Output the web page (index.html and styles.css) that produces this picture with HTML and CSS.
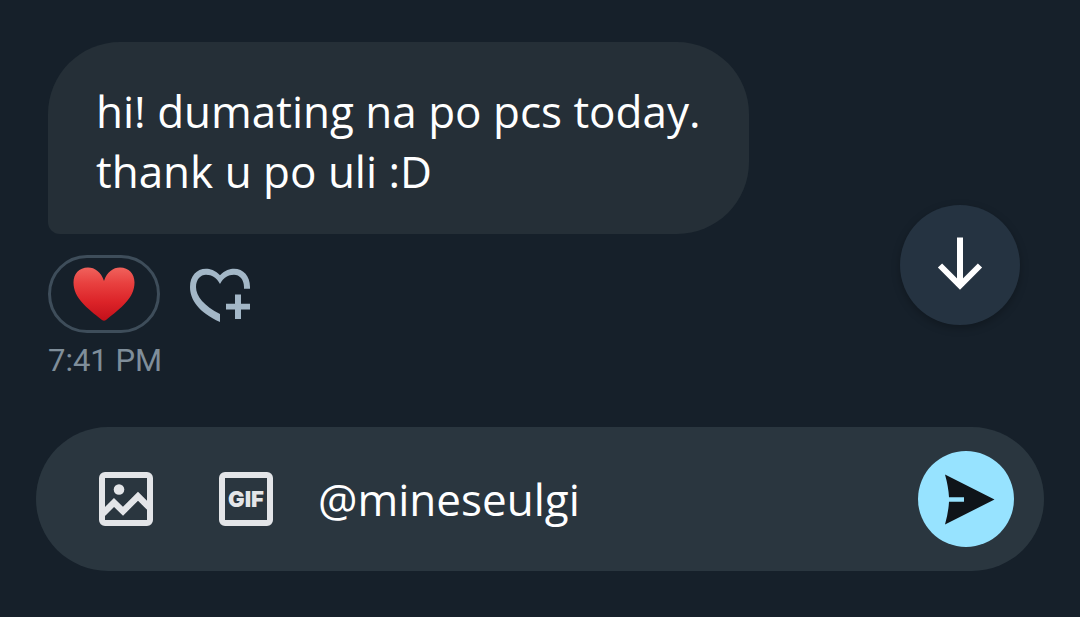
FILE: index.html
```html
<!DOCTYPE html>
<html lang="tl">
<head>
  <meta charset="UTF-8">
  <meta name="viewport" content="width=device-width, initial-scale=1">
  <title>Messages</title>
  <link rel="stylesheet" href="styles.css">
</head>
<body>
  <main class="chat">
    <!-- Received message -->
    <section class="message">
      <p class="bubble">hi! dumating na po pcs today.<br>thank u po uli :D</p>
      <div class="reactions">
        <button class="reaction" type="button" aria-label="Heart reaction">
          <svg width="62" height="54" viewBox="0 0 62 54">
            <defs>
              <linearGradient id="heartFill" x1="0" y1="0" x2="0" y2="1">
                <stop offset="0" stop-color="#f0625c"/>
                <stop offset="0.3" stop-color="#e8403f"/>
                <stop offset="0.65" stop-color="#dc2328"/>
                <stop offset="1" stop-color="#c2101a"/>
              </linearGradient>
            </defs>
            <path fill="url(#heartFill)" d="M31 14C28 5 22 0.500 15 0.500C6 0.500 0.500 7 0.500 15.500C0.500 31 14 41 29 53Q31 54.500 33 53C48 41 61.500 31 61.500 15.500C61.500 7 56 0.500 47 0.500C40 0.500 34 5 31 14Z"/>
          </svg>
        </button>
        <button class="add-reaction" type="button" aria-label="Add reaction">
          <svg width="72" height="72" viewBox="0 0 72 72" fill="currentColor">
            <path d="M36 17.200C31 12 26 10.700 22 10.700C12.500 10.700 6 18 6 29C6 42 15 54.500 36 64V56C20 48 12 38 12 29C12 21.500 16.500 16.700 22 16.700C28 16.700 32.500 19.500 36 26C39.500 19.500 44 16.700 50 16.700C55.500 16.700 60 21.500 60 29V30.700H66V29C66 18 59.500 10.700 50 10.700C46 10.700 41 12 36 17.200Z"/>
            <path d="M51 36.500H57V45.700H66V51.500H57V61H51V51.500H42V45.700H51Z"/>
          </svg>
        </button>
      </div>
      <time class="time" datetime="19:41">7:41 PM</time>
      <button class="scroll-down" type="button" aria-label="Scroll to bottom">
        <svg width="120" height="120" viewBox="0 0 120 120" fill="none" stroke="currentColor" stroke-width="6">
          <path d="M60 32.500V80M40 60.500L60 80.500L80 60.500"/>
        </svg>
      </button>
    </section>

    <!-- Composer -->
    <form class="composer">
      <button class="tool" type="button" aria-label="Add photo">
        <svg width="54" height="54" viewBox="0 0 54 54" fill="none" stroke="currentColor" stroke-width="6">
          <rect x="3" y="3" width="48" height="48" rx="3"/>
          <path stroke-width="6.400" d="M4 41.500L15 30.500L24 39.200L39 24.200L50 35.200"/>
          <circle cx="20" cy="17.500" r="5.300" fill="currentColor" stroke="none"/>
        </svg>
      </button>
      <button class="tool" type="button" aria-label="Add GIF">
        <svg width="54" height="54" viewBox="0 0 54 54">
          <rect x="3" y="3" width="48" height="48" rx="3" fill="none" stroke="currentColor" stroke-width="6"/>
          <text class="gif" x="27" y="35" text-anchor="middle">GIF</text>
        </svg>
      </button>
      <input class="field" type="text" value="@mineseulgi" aria-label="Message">
      <button class="send" type="submit" aria-label="Send">
        <svg width="96" height="96" viewBox="0 0 96 96" fill="currentColor">
          <path d="M27 23.500L76.500 48.500L27 73.500Q30.500 61 31 50.700H46V46.300H31Q30.500 36 27 23.500Z"/>
        </svg>
      </button>
    </form>
  </main>
</body>
</html>
```

FILE: styles.css
```css
* {
  box-sizing: border-box;
}
body {
  margin: 0;
  background-color: #16202a;
  color: #fff;
  font-family: "Open Sans", sans-serif;
}
button {
  display: flex;
  align-items: center;
  justify-content: center;
  flex-shrink: 0;
  padding: 0;
  border: none;
  background: none;
  cursor: pointer;
}
.chat {
  padding: 42px 36px 46px;
  border-bottom: 1px solid #05080d;
}

/* Message */
.message {
  position: relative;
  display: flex;
  flex-direction: column;
  align-items: flex-start;
  padding: 0 12px;
}
.bubble {
  margin: 0;
  padding: 39px 48px 33px;
  border-radius: 72px 72px 72px 12px;
  background-color: #252f37;
  font-size: 44px;
  line-height: 60px;
}
.reactions {
  display: flex;
  align-items: center;
  gap: 24px;
  margin-top: 21px;
}
.reaction {
  width: 112px;
  height: 78px;
  border: 3px solid #3e4d5a;
  border-radius: 39px;
}
.add-reaction {
  color: #a3b7c7;
}
.time {
  margin-top: 8px;
  color: #7f8e9a;
  font-family: Roboto, sans-serif;
  font-size: 31px;
  line-height: 40px;
}
.scroll-down {
  position: absolute;
  right: 24px;
  bottom: 56px;
  border-radius: 50%;
  background-color: #253341;
  color: #fff;
  box-shadow: 0 3px 9px rgba(0, 0, 0, 0.25);
}

/* Composer */
.composer {
  display: flex;
  align-items: center;
  gap: 48px;
  margin-top: 46px;
  padding: 24px 30px 24px 54px;
  border-radius: 72px;
  background-color: #2a363f;
}
.tool {
  width: 72px;
  height: 72px;
  color: #e3e5e8;
}
.gif {
  fill: currentColor;
  font-family: Inter, sans-serif;
  font-size: 22px;
  font-weight: 900;
}
.field {
  flex: 1;
  min-width: 0;
  margin-left: -12px;
  padding: 0;
  border: none;
  outline: none;
  background: none;
  color: #fff;
  font-family: inherit;
  font-size: 44px;
  line-height: 60px;
}
.send {
  border-radius: 50%;
  background-color: #97e3ff;
  color: #0f1419;
}
```
